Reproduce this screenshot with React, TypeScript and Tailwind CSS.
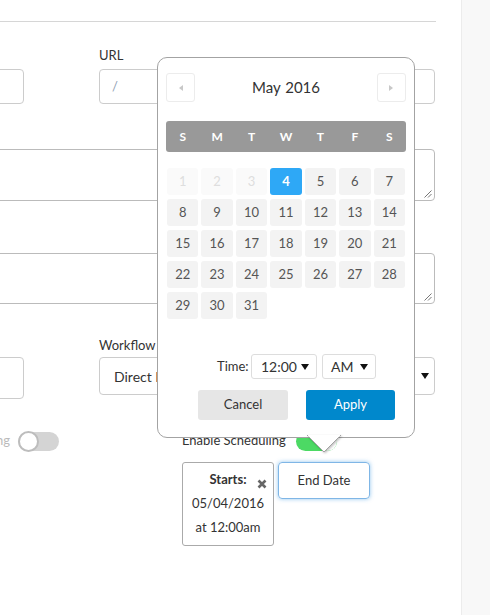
import React from "react";

const Caret = ({ className = "" }: { className?: string }) => (
  <svg width="8" height="6" viewBox="0 0 8 6" className={className}>
    <path d="M0 0H8L4 6Z" fill="#111" />
  </svg>
);

const Resize = () => (
  <svg width="9" height="9" viewBox="0 0 9 9" className="absolute right-[2px] bottom-[2px]">
    <path d="M8.5 1.5L1.5 8.5M8.5 5L5 8.5" stroke="#777" strokeWidth="1" />
  </svg>
);

const days = Array.from({ length: 31 }, (_, i) => i + 1);

export default function App() {
  return (
    <div className="w-[490px] h-[615px] flex bg-white overflow-hidden font-['Lato','Liberation_Sans',sans-serif] text-[#333]">
      <div className="relative w-[461px] h-full overflow-hidden">
        <div className="mt-[21px] w-[436px] border-t border-[#d6d6d6]" />
        <div className="ml-[-60px] w-[495px]">
          {/* Row 1 */}
          <div className="mt-[25px] grid grid-cols-[84px_336px] gap-x-[75px]">
            <div className="pt-[22px]">
              <div className="h-[35px] rounded-[4px] border border-[#ccc]" />
            </div>
            <div>
              <div className="h-[16px] leading-[16px] text-[13px] mb-[6px]">URL</div>
              <div className="h-[35px] rounded-[4px] border border-[#ccc] px-[12px] flex items-center text-[#8fa0b3] text-[13px]">
                /
              </div>
            </div>
          </div>
          {/* Textareas */}
          <div className="relative mt-[45px] h-[52px] rounded-[4px] border border-[#bbb]">
            <Resize />
          </div>
          <div className="relative mt-[52px] h-[51px] rounded-[4px] border border-[#bbb]">
            <Resize />
          </div>
          {/* Row 3 */}
          <div className="mt-[33px] grid grid-cols-[84px_336px] gap-x-[75px]">
            <div className="pt-[20px]">
              <div className="h-[42px] rounded-[4px] border border-[#ccc]" />
            </div>
            <div>
              <div className="h-[16px] leading-[16px] text-[13px] mb-[4px]">Workflow</div>
              <div className="h-[38px] rounded-[4px] border border-[#ccc] pl-[14px] pr-[5px] flex items-center justify-between text-[14px]">
                <span>Direct Publish</span>
                <Caret />
              </div>
            </div>
          </div>
          {/* Row 4 toggles */}
          <div className="mt-[32px] flex items-center h-[20px]">
            <span className="w-[70px] text-right text-[13px] text-[#bbb] whitespace-nowrap">Publishing</span>
            <div className="ml-[8px] w-[41px] h-[19px] rounded-full bg-[#d4d4d4] relative flex items-center">
              <div className="w-[21px] h-[21px] rounded-full bg-white border-[2px] border-[#bdbdbd]" />
            </div>
            <span className="ml-[123px] w-[106px] text-[13px] whitespace-nowrap">Enable Scheduling</span>
            <div className="ml-[8px] w-[41px] h-[19px] rounded-full bg-[#4cd964] flex items-center justify-end">
              <div className="w-[19px] h-[19px] rounded-full bg-white" />
            </div>
          </div>
          {/* Row 5 */}
          <div className="mt-[11px] ml-[242px] flex items-start">
            <div className="relative w-[92px] h-[84px] rounded-[3px] border border-[#aaa] pt-[4px] text-center text-[13px] leading-[24px]">
              <div className="font-bold text-[13px]">Starts:</div>
              <div>05/04/2016</div>
              <div>at 12:00am</div>
              <svg width="10" height="10" viewBox="0 0 10 10" className="absolute left-[74px] top-[16px]">
                <path d="M1.5 1.5L8.5 8.5M8.5 1.5L1.5 8.5" stroke="#666" strokeWidth="2.6" />
              </svg>
            </div>
            <div className="ml-[4px] w-[92px] h-[37px] rounded-[4px] border border-[#7fb6e6] shadow-[0_0_4px_rgba(102,175,233,0.7)] flex items-center justify-center text-[13px]">
              End Date
            </div>
          </div>
        </div>

        {/* Popover */}
        <div className="absolute left-[157px] top-[57px] w-[258px] h-[381px] rounded-[10px] border border-[#a3a3a3] bg-white px-[8px] pt-[15px]">
          <div className="flex items-center justify-between h-[29px]">
            <div className="w-[29px] h-[29px] rounded-[3px] border border-[#ececec] flex items-center justify-center">
              <svg width="4" height="6" viewBox="0 0 4 6"><path d="M4 0V6L0 3Z" fill="#c8c8c8" /></svg>
            </div>
            <div className="text-[15px] text-[#333] [word-spacing:1px]">May 2016</div>
            <div className="w-[29px] h-[29px] rounded-[3px] border border-[#ececec] flex items-center justify-center">
              <svg width="4" height="6" viewBox="0 0 4 6"><path d="M0 0V6L4 3Z" fill="#c8c8c8" /></svg>
            </div>
          </div>
          <div className="mt-[19px] h-[31px] rounded-[3px] bg-[#999] px-[1px] grid grid-cols-7 gap-x-[3px] items-center text-center text-white font-bold text-[12px]">
            {["S", "M", "T", "W", "T", "F", "S"].map((d, i) => (
              <div key={i}>{d}</div>
            ))}
          </div>
          <div className="mt-[16px] mx-[1px] grid grid-cols-7 gap-x-[3px] gap-y-[4px]">
            {days.map((d) => {
              const cls =
                d < 4
                  ? "bg-[#fafafa] text-[#dedede]"
                  : d === 4
                  ? "bg-[#2ea8f6] text-white font-bold"
                  : "bg-[#f3f3f3] text-[#555]";
              return (
                <div key={d} className={`h-[27px] rounded-[3px] flex items-center justify-center text-[13px] ${cls}`}>
                  {d}
                </div>
              );
            })}
            {Array.from({ length: 11 }, (_, i) => (
              <div key={"e" + i} className="h-[27px]" />
            ))}
          </div>
          <div className="mt-[4px] h-[25px] pl-[51px] flex items-center">
            <span className="text-[13px] w-[34px]">Time:</span>
            <div className="w-[66px] h-[25px] rounded-[3px] border border-[#ddd] flex items-center justify-between pl-[9px] pr-[7px] text-[14px]">
              <span>12:00</span>
              <Caret />
            </div>
            <div className="ml-[5px] w-[54px] h-[25px] rounded-[3px] border border-[#ddd] flex items-center justify-between pl-[8px] pr-[7px] text-[14px]">
              <span>AM</span>
              <Caret />
            </div>
          </div>
          <div className="mt-[11px] pl-[32px] flex gap-[18px]">
            <div className="w-[90px] h-[30px] rounded-[3px] bg-[#e6e6e6] flex items-center justify-center text-[13px] text-[#333]">
              Cancel
            </div>
            <div className="w-[89px] h-[30px] rounded-[3px] bg-[#0088cc] flex items-center justify-center text-[13px] text-white">
              Apply
            </div>
          </div>
          <svg
            width="36"
            height="19"
            viewBox="0 0 36 19"
            className="absolute left-[148px] bottom-[-17px] drop-shadow-[1px_1px_1px_rgba(0,0,0,0.25)]"
          >
            <path d="M1 0L18 17L35 0Z" fill="white" />
            <path d="M1 0L18 17L35 0" fill="none" stroke="#a3a3a3" strokeWidth="1" />
            <rect x="2" y="0" width="32" height="1.5" fill="white" />
          </svg>
        </div>
      </div>
      <div className="flex-1 h-full bg-[#f8f8f8] border-l border-[#ececec]" />
    </div>
  );
}
